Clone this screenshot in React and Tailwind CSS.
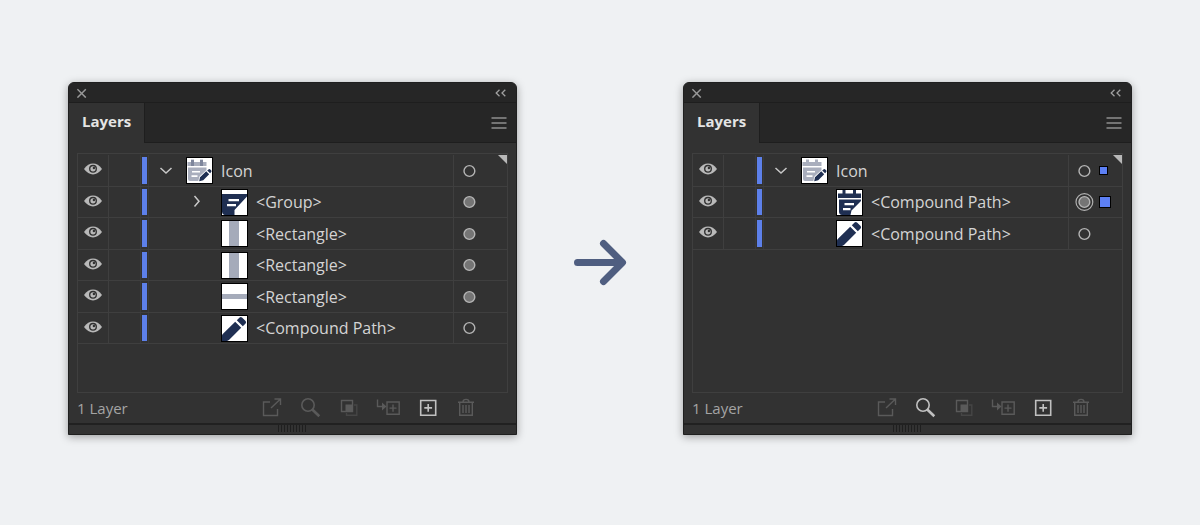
import { useState } from "react";
import clsx from "clsx";

const beforeLayers = [
    { name: "Icon", thumb: "icon", open: true, level: 0, target: "empty" },
    { name: "<Group>", thumb: "group", open: false, level: 1, target: "filled" },
    { name: "<Rectangle>", thumb: "column", level: 1, target: "filled" },
    { name: "<Rectangle>", thumb: "column", level: 1, target: "filled" },
    { name: "<Rectangle>", thumb: "bar", level: 1, target: "filled" },
    { name: "<Compound Path>", thumb: "pencil", level: 1, target: "empty" },
];

const afterLayers = [
    { name: "Icon", thumb: "iconFlat", open: true, level: 0, target: "empty", selected: "small" },
    { name: "<Compound Path>", thumb: "calendar", level: 1, target: "active", selected: "large" },
    { name: "<Compound Path>", thumb: "pencil", level: 1, target: "empty" },
];

function SmallPencil() {
    return (
        <g>
            <path d="M13.4 23.8 L14.2 19.8 L20.2 14.3 L25.2 12.5 L25.2 15 L23.2 17.2 L17.4 22.9 Z" fill="#fff" stroke="#fff" strokeWidth="1.5" strokeLinejoin="round" />
            <path d="M13.2 24.2 L14 20.2 L20.2 14.3 L23.2 17.2 L17.2 23.2 Z M21.2 13.5 L22.8 12.2 Q23.6 11.8 24.3 12.5 L25.3 13.6 Q25.8 14.4 25.2 15 L24.1 16.3 Z" fill="#1f2f52" />
        </g>
    );
}

function Thumb({ kind }) {
    return (
        <svg className="size-[27px] shrink-0" viewBox="0 0 27 27" aria-hidden="true">
            <rect width="27" height="27" fill="#000" />
            <rect x="1" y="1" width="25" height="25" fill="#fff" />
            {(kind === "icon" || kind === "iconFlat") && (
                <>
                    <path d="M1.5 5 H20.5 V9 H1.5 Z M2 10.5 H20.5 V13.5 L13 21 L12.5 24 H4 Q2 24 2 22 Z" fill="#a9aebd" />
                    <path d="M5 2.5 H8 V6 H5 Z M14 2.5 H17 V6 H14 Z" fill="#a9aebd" />
                    {kind === "icon" && <path d="M5 3 H8 V9 H5 Z M14 3 H17 V9 H14 Z" fill="#7e869c" />}
                    <path d="M6 14 H14 V15.6 H6 Z M5.5 18.3 H11.5 V19.9 H5.5 Z" fill="#fff" />
                    <SmallPencil />
                </>
            )}
            {kind === "group" && (
                <>
                    <path d="M1 5 H26 V7.5 L13.5 21 V26 H3.5 Q1.2 25.6 1 23 Z" fill="#1f2f52" />
                    <path d="M7.5 10 H18 V12.2 H7.5 Z M6 15 H15 V17.2 H6 Z" fill="#fff" />
                </>
            )}
            {kind === "column" && <rect x="8" y="1" width="10" height="25" fill="#a5abba" />}
            {kind === "bar" && <rect x="1" y="11" width="25" height="5" fill="#a5abba" />}
            {kind === "pencil" && (
                <path d="M1 26 V20.5 Q1.2 19.6 2 18.8 L14.2 6.8 L20.2 12.8 L8.2 24.8 Q7.2 25.8 6 26 Z M15.8 5.2 L18.6 2.4 Q19.8 1.4 21 2.4 L24.6 6 Q25.6 7.2 24.6 8.4 L21.8 11.2 Z" fill="#1f2f52" />
            )}
            {kind === "calendar" && (
                <>
                    <path d="M2 4.5 H6.5 V1 H9.5 V4.5 H17 V1 H20 V4.5 H25 V9 H2 Z M3 10.5 H25 V12 L15.5 21.5 L14.5 26 H6 Q3 25.6 3 22.5 Z" fill="#1f2f52" />
                    <path d="M8.5 14 H18 V16.2 H8.5 Z M7 19 H14.5 V21.2 H7 Z" fill="#fff" />
                </>
            )}
        </svg>
    );
}

function EyeIcon() {
    return (
        <svg className="h-3 w-[18px]" viewBox="0 0 18 12" fill="none">
            <path d="M0 6 Q4 0.6 9 0.6 T18 6 Q14 11.4 9 11.4 T0 6 Z" fill="#b9b9b9" />
            <circle cx="9" cy="5.8" r="4" fill="#323232" />
            <circle cx="9" cy="5.8" r="2.6" fill="#b9b9b9" />
            <circle cx="9.9" cy="5" r="1.2" fill="#323232" />
        </svg>
    );
}

function TargetIcon({ kind }) {
    return (
        <svg className="size-5" viewBox="0 0 20 20" fill="none">
            {kind === "active" && <circle cx="10.4" cy="10" r="8.4" stroke="#b0b0b0" strokeWidth="1.2" />}
            <circle cx="10.4" cy="10" r="5.4" fill={kind === "empty" ? "none" : "#757575"} stroke="#b4b4b4" strokeWidth="1.4" />
        </svg>
    );
}

function LayerRow({ layer }) {
    const [visible, setVisible] = useState(true);

    return (
        <li className="flex odd:h-8 even:h-[31px] border-b border-[#3f3f3f]">
            <button
                type="button"
                aria-label="Toggle visibility"
                onClick={() => setVisible(!visible)}
                className="flex w-[31px] shrink-0 border-r border-[#3f3f3f] pt-2 pl-[6px]"
            >
                {visible && <EyeIcon />}
            </button>
            <div className="w-8 shrink-0 border-r border-[#3a3a3a]" />
            <div className="w-2 shrink-0 border-r border-[#3a3a3a] py-[2px] pl-px">
                <div className="h-full w-[5px] bg-[#5d80ea]" />
            </div>
            <div className={clsx("flex min-w-0 flex-1 items-center", layer.level === 0 ? "pl-[9px]" : "pl-10")}>
                <div className={clsx("flex shrink-0 items-center", layer.level === 0 ? "w-7" : "w-8")}>
                    {layer.open !== undefined && (
                        <button type="button" aria-label="Expand layer" className="flex size-4 items-center justify-center">
                            <svg className="size-[14px]" viewBox="0 0 14 14" fill="none" stroke="#c8c8c8" strokeWidth="1.5">
                                <path d={layer.open ? "M1.5 4 L7 9 L12.5 4" : "M4.5 1 L9 6.2 L4.5 11.5"} />
                            </svg>
                        </button>
                    )}
                </div>
                <Thumb kind={layer.thumb} />
                <span className="truncate pl-2 text-base leading-6 font-medium text-[#d4d4d4]">{layer.name}</span>
            </div>
            <div className="flex w-[54px] shrink-0 items-center border-l border-[#3f3f3f] pl-[5px]">
                <button type="button" aria-label="Target layer">
                    <TargetIcon kind={layer.target} />
                </button>
                {layer.selected && (
                    <span
                        className={clsx(
                            "ml-[5px] border border-black bg-[#5d80f5]",
                            layer.selected === "small" ? "size-[9px]" : "size-3"
                        )}
                    />
                )}
            </div>
        </li>
    );
}

function ToolButton({ label, bright, children }) {
    return (
        <button
            type="button"
            aria-label={label}
            className={clsx("flex h-5 w-6 items-center justify-center", bright ? "text-[#c0c0c0]" : "text-[#5a5a5a]")}
        >
            <svg className="h-5 w-6" viewBox="0 0 24 20" fill="none" stroke="currentColor" strokeWidth="1.4">
                {children}
            </svg>
        </button>
    );
}

function LayersPanel({ layers, canLocate }) {
    return (
        <section className="min-w-0 flex-1 overflow-hidden rounded-t-md border border-[#1f1f1f] bg-[#323232] shadow-[0_2px_8px_rgba(0,0,0,0.35)]">
            <div className="flex h-5 items-center justify-between border-b border-[#1e1e1e] bg-[#262626] pr-[10px] pl-2">
                <button type="button" aria-label="Close">
                    <svg className="size-[10px]" viewBox="0 0 10 10" stroke="#979797" strokeWidth="1.5">
                        <path d="M0.4 1.2 L8.8 9.6 M8.8 1.2 L0.4 9.6" />
                    </svg>
                </button>
                <button type="button" aria-label="Collapse">
                    <svg className="h-2 w-[11px]" viewBox="0 0 11 8" fill="none" stroke="#9f9f9f" strokeWidth="1.3">
                        <path d="M4.5 0.7 L1.2 4 L4.5 7.3 M10.3 0.7 L7 4 L10.3 7.3" />
                    </svg>
                </button>
            </div>
            <div className="flex h-10 justify-between bg-[#262626]">
                <button type="button" className="border-r border-[#1e1e1e] bg-[#323232] px-[13px] pb-1 text-[15px] font-bold text-[#e4e4e4]">
                    Layers
                </button>
                <div className="flex flex-1 items-center justify-end border-b border-[#1e1e1e] pr-[9px]">
                    <button type="button" aria-label="Panel menu" className="mt-px">
                        <svg className="h-3 w-4" viewBox="0 0 16 12" stroke="#8f8f8f" strokeWidth="1.3">
                            <path d="M0.5 1 H15.5 M0.5 6 H15.5 M0.5 11 H15.5" />
                        </svg>
                    </button>
                </div>
            </div>

            <div className="relative mx-2 mt-[10px] h-60 border border-[#3f3f3f] pt-px">
                <ul>
                    {layers.map((layer, index) => (
                        <LayerRow key={index} layer={layer} />
                    ))}
                </ul>
                <svg className="absolute top-px right-0 size-[9px]" viewBox="0 0 9 9" fill="#b8b8b8">
                    <path d="M0 0 H9 V9 Z" />
                </svg>
            </div>

            <div className="flex h-[30px] items-center pr-[38px] pl-2">
                <span className="flex-1 text-[15px] leading-5 font-medium text-[#a4a4a4]">{layers.filter((l) => l.level === 0).length} Layer</span>
                <div className="flex gap-[15px]">
                    <ToolButton label="Collect for export">
                        <path d="M11 4 H4.5 V17.5 H18.5 V11 M12 10 L21.5 1 M15.5 1 H21.5 V7" />
                    </ToolButton>
                    <ToolButton label="Locate object" bright={canLocate}>
                        <circle cx="10" cy="7" r="6.2" strokeWidth="1.6" />
                        <path d="M14.3 11.5 L21.3 18.3" strokeWidth="2.6" />
                    </ToolButton>
                    <ToolButton label="Make clipping mask">
                        <path d="M4.5 2.5 H15.5 V13.5 H4.5 Z" />
                        <path d="M8.5 6.5 H15.5 V13.5 H8.5 Z" fill="currentColor" stroke="none" />
                        <path d="M17 7 H19.8 V17.3 H9.5 V15" opacity="0.5" />
                    </ToolButton>
                    <ToolButton label="Create new sublayer">
                        <path d="M1.5 1.5 V8.5 H8.5 M11 4 H23.2 V16.2 H11 Z M17 6.5 V13.7 M13.5 10.1 H20.5" />
                        <path d="M6 4.5 L10.5 8.5 L6 12.5 Z" fill="currentColor" stroke="none" />
                    </ToolButton>
                    <ToolButton label="Create new layer" bright>
                        <path d="M5.7 2.5 H20.7 V17.3 H5.7 Z M13.2 6 V13.8 M9.3 9.9 H17.1" strokeWidth="1.6" />
                    </ToolButton>
                    <ToolButton label="Delete selection">
                        <path d="M4 4.3 H20 M9 4 Q9 1.4 12 1.4 T15 4 M5.7 4.5 V17.3 H18.3 V4.5 M9 7 V15 M12 7 V15 M15 7 V15" />
                    </ToolButton>
                </div>
            </div>
            <div className="flex h-[11px] justify-center border-t-2 border-[#212121] pr-[2px]">
                <svg className="h-2 w-[30px]" viewBox="0 0 30 8" stroke="#1f1f1f" strokeWidth="1">
                    <path d="M1.5 0 V7 M4.5 0 V7 M7.5 0 V7 M10.5 0 V7 M13.5 0 V7 M16.5 0 V7 M19.5 0 V7 M22.5 0 V7 M25.5 0 V7 M28.5 0 V7" />
                </svg>
            </div>
        </section>
    );
}

function App() {
    return (
        <main className="flex min-h-screen items-start bg-[#eff1f3] px-[68px] pt-[82px] pb-20 font-['Open_Sans','Noto_Sans',sans-serif]">
            <LayersPanel layers={beforeLayers} />
            <div className="flex w-[166px] shrink-0 justify-center self-stretch pt-[156px]">
                <svg className="h-12 w-[54px]" viewBox="0 0 54 48" fill="none" stroke="#4f5e80" strokeWidth="7" strokeLinecap="round" strokeLinejoin="round">
                    <path d="M4.5 24.5 H49 M30.5 5.5 L49.5 24.5 L30.5 43.5" />
                </svg>
            </div>
            <LayersPanel layers={afterLayers} canLocate />
        </main>
    );
}

export default App;
